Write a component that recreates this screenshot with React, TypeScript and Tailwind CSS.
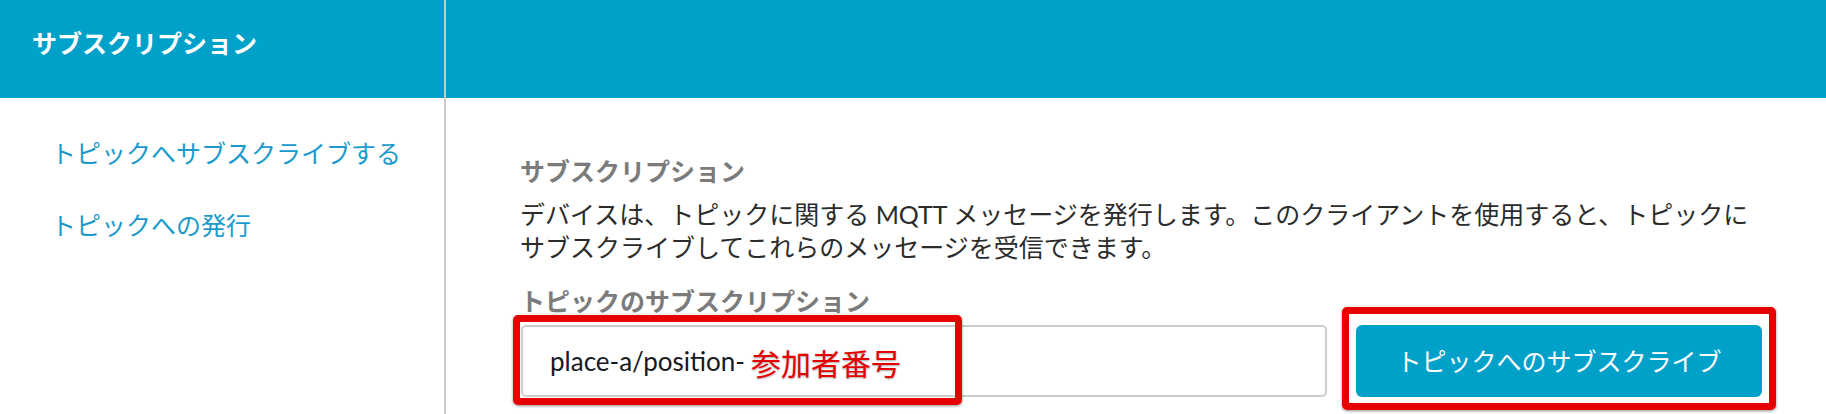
import React from "react";

const navItems = ["トピックへサブスクライブする", "トピックへの発行"];

export default function App() {
  return (
    <div className="relative flex h-[414px] w-[1826px] overflow-hidden bg-white font-['Lato','Noto_Sans_CJK_JP',sans-serif] text-[25px] leading-[33px]">
      {/* Left navigation column */}
      <aside className="w-[444px] shrink-0">
        <div className="h-[98px] bg-[#00a1c9] pl-[32px] pt-[27px] font-bold text-white">
          サブスクリプション
        </div>
        <nav className="flex flex-col items-start gap-[39px] pl-[51px] pt-[39px] text-[#1a9bcb]">
          {navItems.map((item) => (
            <a key={item} href="#" className="hover:underline">
              {item}
            </a>
          ))}
        </nav>
      </aside>

      <div className="w-[2px] shrink-0 bg-[#cccccc]" />

      {/* Main content */}
      <main className="flex-1">
        <div className="h-[98px] bg-[#00a1c9]" />
        <section className="pl-[74px] pt-[57px]">
          <h2 className="font-bold text-[#7b7b7b]">サブスクリプション</h2>
          <p className="mt-[10px] text-[#2b2b2b]">
            デバイスは、トピックに関する MQTT メッセージを発行します。このクライアントを使用すると、トピックに
            <br />
            サブスクライブしてこれらのメッセージを受信できます。
          </p>
          <h3 className="mt-[21px] font-bold text-[#7b7b7b]">トピックのサブスクリプション</h3>
          <div className="mt-[7px] flex gap-[29px] pl-px">
            <div className="flex h-[72px] w-[806px] items-center rounded-[5px] border-2 border-[#cccccc] px-[27px] text-[26px] text-[#16191f]">
              place-a/position-
            </div>
            <button className="h-[72px] w-[406px] rounded-[6px] bg-[#00a1c9] text-white">
              トピックへのサブスクライブ
            </button>
          </div>
        </section>
      </main>

      {/* Annotation overlays */}
      <div className="pointer-events-none absolute left-[513px] top-[315px] h-[90px] w-[449px] rounded-[5px] border-[7px] border-[#e60000] shadow-[0_1px_3px_rgba(0,0,0,0.45)]" />
      <div className="pointer-events-none absolute left-[1342px] top-[307px] h-[103px] w-[434px] rounded-[5px] border-[7px] border-[#e60000] shadow-[0_1px_3px_rgba(0,0,0,0.45)]" />
      <div className="pointer-events-none absolute left-[746px] top-[343px] h-[40px] bg-white pl-[5px] pr-[3px] text-[30px] leading-[40px] text-[#e60000] [-webkit-text-stroke:3px_white] [paint-order:stroke_fill] [text-shadow:0_1px_2px_rgba(0,0,0,0.35)]">
        参加者番号
      </div>
    </div>
  );
}
